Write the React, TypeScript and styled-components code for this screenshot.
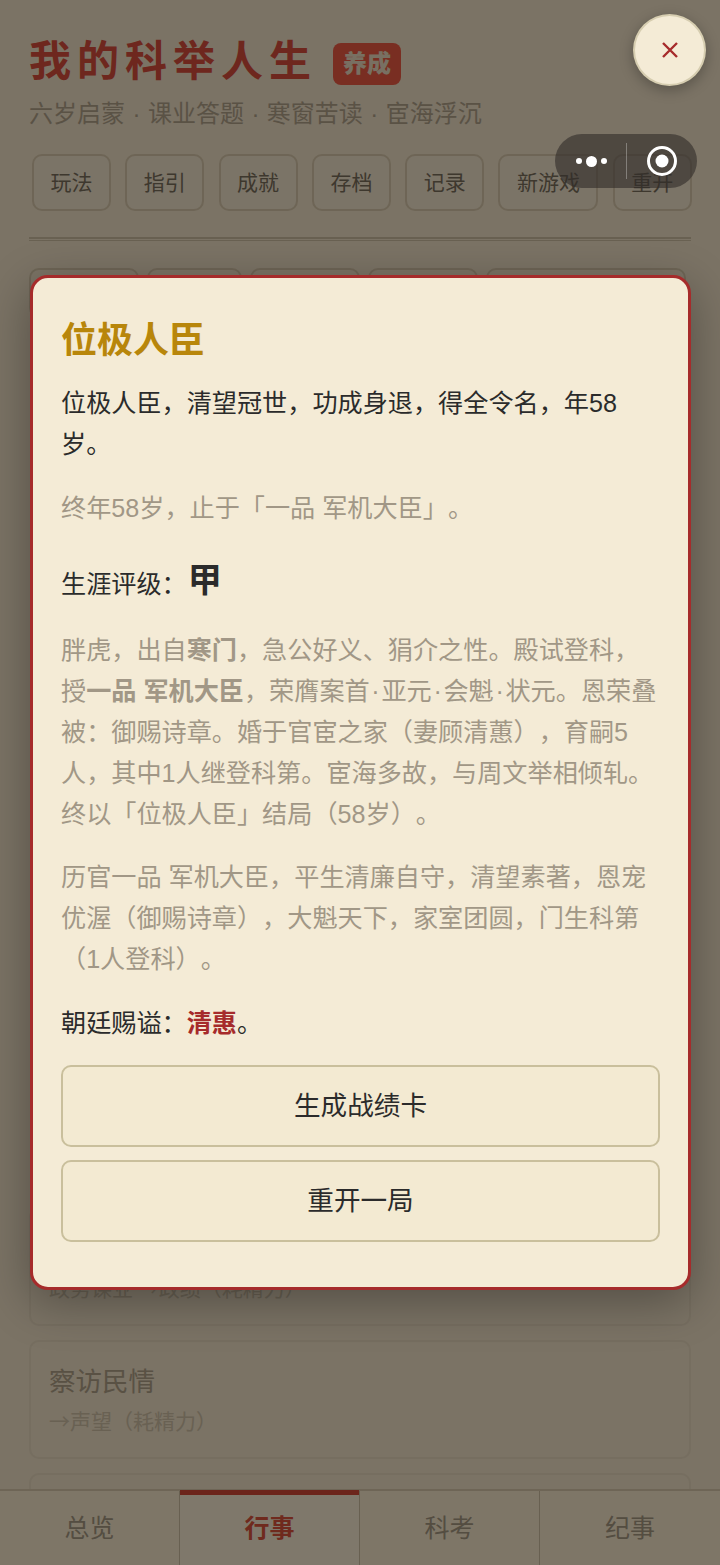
// App.tsx
import React from "react";
import styled, { createGlobalStyle } from "styled-components";

const GlobalStyle = createGlobalStyle`
  html, body {
    margin: 0;
    padding: 0;
    height: 100%;
    overflow: hidden;
    background: #f6e6ca;
  }
  * { box-sizing: border-box; }
`;

const FONT = `"Liberation Sans", "Noto Sans CJK SC", sans-serif`;

const Page = styled.div`
  position: relative;
  width: 720px;
  height: 1565px;
  overflow: hidden;
  background: #f6e6ca;
  font-family: ${FONT};
  text-spacing-trim: space-all;
  padding: 0 29px;
`;

// 页头
const Header = styled.header`
  padding-top: 32px;
`;

const TitleRow = styled.div`
  display: flex;
  align-items: center;
  gap: 16px;
  height: 60px;
`;

const Title = styled.h1`
  margin: 0;
  font-size: 42px;
  line-height: 60px;
  font-weight: 700;
  letter-spacing: 6px;
  color: #dc4f3c;
`;

const Badge = styled.span`
  width: 68px;
  height: 42px;
  margin-top: 4px;
  border-radius: 8px;
  background: #f25c44;
  color: #f0e0c4;
  font-size: 24px;
  font-weight: 900;
  line-height: 42px;
  text-align: center;
`;

const Subtitle = styled.p`
  margin: 4px 0 0;
  font-size: 24px;
  line-height: 36px;
  word-spacing: 0.8px;
  color: #b4a48a;
  white-space: nowrap;
`;

const Toolbar = styled.div`
  display: flex;
  gap: 14.3px;
  margin: 22px 0 0 3px;
`;

const ToolButton = styled.button`
  height: 57px;
  padding: 0 16.5px 4px;
  border: 2px solid #dccbac;
  border-radius: 10px;
  background: #f6e8cf;
  color: #7c705c;
  font-family: ${FONT};
  font-size: 21px;
  white-space: nowrap;
`;

const Divider = styled.div`
  height: 4px;
  margin-top: 26px;
  border-top: 2px solid #d2c2a4;
  border-bottom: 1px solid #d2c2a4;
`;

const TabRow = styled.div`
  display: flex;
  gap: 8px;
  margin-top: 27px;
`;

const SubTab = styled.div<{ $width: number }>`
  width: ${({ $width }) => $width}px;
  height: 50px;
  border: 2px solid #dccbac;
  border-radius: 10px;
`;

// 行事列表
const CardList = styled.div`
  display: flex;
  flex-direction: column;
  gap: 14px;
  margin-top: 889px;
`;

const ActionCard = styled.div`
  height: 119px;
  padding: 20px 18px;
  border: 2px solid #ecdcc0;
  border-radius: 10px;
`;

const ActionName = styled.div`
  font-size: 26.5px;
  line-height: 40px;
  color: #b2a288;
`;

const ActionHint = styled.div`
  margin-top: 2px;
  font-family: "Noto Sans CJK SC", sans-serif;
  font-size: 21px;
  line-height: 32px;
  color: #d2c2a6;
`;

// 底部导航
const BottomNav = styled.nav`
  position: absolute;
  left: 0;
  right: 0;
  bottom: 0;
  height: 76px;
  display: grid;
  grid-template-columns: repeat(4, 1fr);
  background: #fceccf;
  border-top: 2px solid #dccbac;
`;

const NavItem = styled.div<{ $active?: boolean }>`
  position: relative;
  display: flex;
  align-items: center;
  justify-content: center;
  padding-bottom: 4px;
  font-size: 25px;
  font-weight: ${({ $active }) => ($active ? 700 : 400)};
  color: ${({ $active }) => ($active ? "#de543c" : "#a89a82")};
  background: ${({ $active }) => ($active ? "#fff0d6" : "transparent")};
  border-right: 1px solid #d0c0a2;

  &:last-child {
    border-right: none;
  }

  &::before {
    content: "";
    display: ${({ $active }) => ($active ? "block" : "none")};
    position: absolute;
    left: 0;
    right: 0;
    top: -1px;
    height: 5px;
    background: #d84a36;
  }
`;

// 遮罩与弹窗
const Overlay = styled.div`
  position: absolute;
  inset: 0;
  background: rgba(0, 0, 0, 0.5);
`;

const Modal = styled.div`
  position: absolute;
  left: 30px;
  top: 275px;
  width: 661px;
  height: 1015px;
  padding: 34px 28px 0;
  border: 3px solid #a62b2b;
  border-radius: 18px;
  background: #f4ebd6;
  box-shadow: 0 12px 48px rgba(0, 0, 0, 0.32);
  display: flex;
  flex-direction: column;
`;

const EndingTitle = styled.h2`
  margin: 0;
  font-size: 36px;
  line-height: 58px;
  font-weight: 700;
  color: #b8860b;
`;

const Lead = styled.p`
  margin: 13px 0 0;
  font-size: 25.15px;
  line-height: 41px;
  color: #2b2b2b;
`;

const Muted = styled.p<{ $gap: number }>`
  margin: ${({ $gap }) => $gap}px 0 0;
  font-size: 25.15px;
  line-height: 41px;
  color: #a19786;

  b {
    font-weight: 700;
  }
`;

const MidDot = styled.span`
  margin: 0 1.7px;
`;

const GradeRow = styled.div`
  display: flex;
  align-items: center;
  margin-top: 29px;
  height: 48px;
  font-size: 25.15px;
  color: #2b2b2b;
`;

const GradeValue = styled.strong`
  margin: -10px 0 0 1px;
  font-size: 34px;
  font-weight: 700;
  color: #2b2b2b;
`;

const Posthumous = styled.p`
  margin: 23px 0 0;
  font-size: 25.15px;
  line-height: 41px;
  color: #2b2b2b;
`;

const PosthumousName = styled.strong`
  font-weight: 700;
  color: #a62b2b;
`;

const ModalActions = styled.div`
  display: flex;
  flex-direction: column;
  gap: 13px;
  margin-top: 21px;
`;

const ModalButton = styled.button`
  height: 82px;
  padding: 0 0 5px;
  border: 2px solid #c9bf9c;
  border-radius: 10px;
  background: #f3ead2;
  color: #2b2b2b;
  font-family: ${FONT};
  font-size: 26.6px;
`;

const CloseButton = styled.button`
  position: absolute;
  left: 633px;
  top: 14px;
  width: 73px;
  height: 72px;
  display: flex;
  align-items: center;
  justify-content: center;
  padding: 0;
  border: 2px solid #d6cdb0;
  border-radius: 50%;
  background: #f4ebd6;
  box-shadow: 0 4px 14px rgba(0, 0, 0, 0.28);
`;

// 小程序胶囊
const Capsule = styled.div`
  position: absolute;
  left: 555px;
  top: 134px;
  width: 142px;
  height: 54px;
  display: flex;
  align-items: center;
  border-radius: 27px;
  background: rgba(50, 45, 42, 0.62);
`;

const CapsuleDots = styled.div`
  width: 71px;
  display: flex;
  align-items: center;
  justify-content: center;
  gap: 4px;
  padding-left: 1px;
`;

const Dot = styled.span<{ $size: number }>`
  width: ${({ $size }) => $size}px;
  height: ${({ $size }) => $size}px;
  border-radius: 50%;
  background: #fff;
`;

const CapsuleLine = styled.div`
  width: 1px;
  height: 36px;
  background: rgba(255, 255, 255, 0.3);
`;

const CapsuleTarget = styled.div`
  flex: 1;
  display: flex;
  align-items: center;
  justify-content: center;
`;

const TOOLS = ["玩法", "指引", "成就", "存档", "记录", "新游戏", "重开"];
const SUB_TABS = [110, 95, 110, 110, 200];
const NAV = ["总览", "行事", "科考", "纪事"];

const App: React.FC = () => {
  return (
    <>
      <GlobalStyle />
      <Page>
        <Header>
          <TitleRow>
            <Title>我的科举人生</Title>
            <Badge>养成</Badge>
          </TitleRow>
          <Subtitle>六岁启蒙 · 课业答题 · 寒窗苦读 · 宦海浮沉</Subtitle>
        </Header>

        <Toolbar>
          {TOOLS.map((tool) => (
            <ToolButton key={tool}>{tool}</ToolButton>
          ))}
        </Toolbar>
        <Divider />

        <TabRow>
          {SUB_TABS.map((width, i) => (
            <SubTab key={i} $width={width} />
          ))}
        </TabRow>

        <CardList>
          <ActionCard>
            <ActionName>勤理政务</ActionName>
            <ActionHint>政务课业 →政绩（耗精力）</ActionHint>
          </ActionCard>
          <ActionCard>
            <ActionName>察访民情</ActionName>
            <ActionHint>→声望（耗精力）</ActionHint>
          </ActionCard>
          <ActionCard />
        </CardList>

        <BottomNav>
          {NAV.map((item) => (
            <NavItem key={item} $active={item === "行事"}>
              {item}
            </NavItem>
          ))}
        </BottomNav>

        <Overlay />

        <Modal>
          <EndingTitle>位极人臣</EndingTitle>
          <Lead>位极人臣，清望冠世，功成身退，得全令名，年58岁。</Lead>
          <Muted $gap={23}>终年58岁，止于「一品 军机大臣」。</Muted>
          <GradeRow>
            生涯评级：<GradeValue>甲</GradeValue>
          </GradeRow>
          <Muted $gap={24}>
            胖虎，出自<b>寒门</b>，急公好义、狷介之性。殿试登科，授<b>一品 军机大臣</b>
            ，荣膺案首<MidDot>·</MidDot>亚元<MidDot>·</MidDot>会魁<MidDot>·</MidDot>
            状元。恩荣叠被：御赐诗章。婚于官宦之家（妻顾清蕙），育嗣5人，其中1人继登科第。宦海多故，与周文举相倾轧。终以「位极人臣」结局（58岁）。
          </Muted>
          <Muted $gap={22}>
            历官一品 军机大臣，平生清廉自守，清望素著，恩宠优渥（御赐诗章），大魁天下，家室团圆，门生科第（1人登科）。
          </Muted>
          <Posthumous>
            朝廷赐谥：<PosthumousName>清惠</PosthumousName>。
          </Posthumous>
          <ModalActions>
            <ModalButton>生成战绩卡</ModalButton>
            <ModalButton>重开一局</ModalButton>
          </ModalActions>
        </Modal>

        <CloseButton aria-label="关闭">
          <svg width="18" height="18" viewBox="0 0 18 18">
            <path d="M2 2L16 16M16 2L2 16" stroke="#a62b2b" strokeWidth="2.4" fill="none" />
          </svg>
        </CloseButton>

        <Capsule>
          <CapsuleDots>
            <Dot $size={6} />
            <Dot $size={11} />
            <Dot $size={6} />
          </CapsuleDots>
          <CapsuleLine />
          <CapsuleTarget>
            <svg width="32" height="32" viewBox="0 0 32 32">
              <circle cx="16" cy="16" r="13.5" stroke="#fff" strokeWidth="3" fill="none" />
              <circle cx="16" cy="16" r="6.5" fill="#fff" />
            </svg>
          </CapsuleTarget>
        </Capsule>
      </Page>
    </>
  );
};

export default App;
